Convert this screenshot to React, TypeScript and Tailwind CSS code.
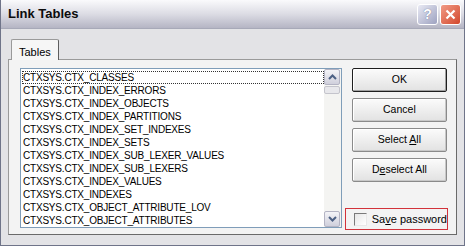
import React from "react";

const tables: string[] = [
  "CTXSYS.CTX_CLASSES",
  "CTXSYS.CTX_INDEX_ERRORS",
  "CTXSYS.CTX_INDEX_OBJECTS",
  "CTXSYS.CTX_INDEX_PARTITIONS",
  "CTXSYS.CTX_INDEX_SET_INDEXES",
  "CTXSYS.CTX_INDEX_SETS",
  "CTXSYS.CTX_INDEX_SUB_LEXER_VALUES",
  "CTXSYS.CTX_INDEX_SUB_LEXERS",
  "CTXSYS.CTX_INDEX_VALUES",
  "CTXSYS.CTX_INDEXES",
  "CTXSYS.CTX_OBJECT_ATTRIBUTE_LOV",
  "CTXSYS.CTX_OBJECT_ATTRIBUTES",
];

type BtnProps = { children: React.ReactNode; active?: boolean };

function Btn({ children, active }: BtnProps) {
  return (
    <div
      className={
        "h-[24px] flex items-center justify-center rounded-[2px] bg-gradient-to-b from-[#fbfbfb] to-[#e2e2e2] " +
        (active
          ? "border border-[#1e1e1e] shadow-[inset_-1px_-1px_0_#a0a0a0,inset_1px_1px_0_#ffffff]"
          : "border border-[#8a8a8a] shadow-[inset_-1px_-1px_0_#c8c8c8,inset_1px_1px_0_#ffffff]")
      }
    >
      {children}
    </div>
  );
}

function ScrollArrow({ up }: { up?: boolean }) {
  return (
    <div className="w-[16px] h-[16px] border border-[#b4b4c4] rounded-[2px] bg-gradient-to-b from-[#f4f4f8] to-[#d0d0dc] flex items-center justify-center">
      <svg width="9" height="6" viewBox="0 0 9 6">
        <path
          d={up ? "M1 5 L4.5 1.5 L8 5" : "M1 1 L4.5 4.5 L8 1"}
          fill="none"
          stroke="#4d6185"
          strokeWidth="2"
        />
      </svg>
    </div>
  );
}

export default function App() {
  return (
    <div
      className="w-[465px] h-[246px] flex flex-col bg-[#e3e3e6] border border-[#6f7489] border-t-0 text-[10.5px] text-black"
      style={{ fontFamily: "'Liberation Sans', Arial, sans-serif" }}
    >
      {/* title bar */}
      <div className="h-[29px] flex items-center justify-between pl-[7px] pr-[3px] bg-gradient-to-b from-[#fafafc] via-[#dcdce4] to-[#b5b5c4] border-b border-[#a7a9b8]">
        <span className="font-bold text-[13px] text-[#0c0c0c]">Link Tables</span>
        <div className="flex gap-[2px]">
          <div className="w-[21px] h-[21px] rounded-[3px] border border-white bg-gradient-to-br from-[#e9eaf4] to-[#9ea2c0] flex items-center justify-center text-white font-bold text-[14px] [text-shadow:0_0_1px_#555a7a]">
            ?
          </div>
          <div className="w-[21px] h-[21px] rounded-[3px] border border-white bg-gradient-to-br from-[#f09a85] to-[#d2452a] flex items-center justify-center">
            <svg width="11" height="11" viewBox="0 0 11 11">
              <path d="M1.5 1.5 L9.5 9.5 M9.5 1.5 L1.5 9.5" stroke="#fff" strokeWidth="2.2" />
            </svg>
          </div>
        </div>
      </div>

      {/* body */}
      <div className="flex-1 px-[7px] pt-[9px] pb-[10px] flex flex-col">
        <div className="flex">
          <div className="ml-[3px] h-[21px] px-[7px] pt-[4px] text-[11px] bg-[#f6f6f6] border border-b-0 border-[#9a9a9a] border-r-[#5e5e5e] rounded-t-[2px] relative top-[1px] z-10">
            Tables
          </div>
        </div>
        <div className="flex-1 border border-[#9a9a9a] border-r-[#6a6a6a] border-b-[#6a6a6a] bg-[#f3f3f3] flex pt-[8px] pl-[11px] pr-[8px] pb-[6px] gap-[9px]">
          {/* list */}
          <div className="w-[329px] border border-[#7f9db9] bg-white flex">
            <div className="flex-1 pt-[2px] pl-[1px] overflow-hidden text-[10px] tracking-[-0.2px]">
              {tables.map((t: string, idx: number) => (
                <div
                  key={t}
                  className={
                    "h-[13px] leading-[13px] pl-[1px] whitespace-nowrap " +
                    (idx === 0 ? "outline outline-1 outline-dotted outline-[#333] -outline-offset-1" : "")
                  }
                >
                  {t}
                </div>
              ))}
            </div>
            <div className="w-[17px] bg-[#f4f4f2] flex flex-col items-center justify-between">
              <div className="flex flex-col">
                <ScrollArrow up />
                <div className="w-[16px] h-[8px] mt-[1px] border border-[#c4c4cc] rounded-[2px] bg-[#e8e8ec]" />
              </div>
              <ScrollArrow />
            </div>
          </div>

          {/* buttons */}
          <div className="flex-1 flex flex-col justify-between">
            <div className="flex flex-col gap-[6px] ml-[1px] mr-[1px]">
              <Btn active>OK</Btn>
              <Btn>Cancel</Btn>
              <Btn>
                <span>
                  Select <u>A</u>ll
                </span>
              </Btn>
              <Btn>
                <span>
                  D<u>e</u>select All
                </span>
              </Btn>
            </div>
            <div className="-ml-[6px] h-[22px] -mb-[2px] border border-[#d2323a] flex items-center pl-[8px] gap-[5px] whitespace-nowrap text-[11px]">
              <div className="w-[13px] h-[13px] shrink-0 border border-[#7a7a7a] border-r-[#e8e8e8] border-b-[#e8e8e8] bg-gradient-to-br from-[#e6e6e6] to-white" />
              <span>
                Sa<u>v</u>e password
              </span>
            </div>
          </div>
        </div>
      </div>
    </div>
  );
}
